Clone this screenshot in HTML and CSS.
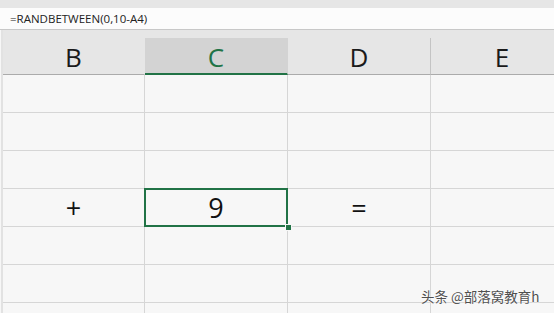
FILE: index.html
```html
<!DOCTYPE html>
<html lang="zh-CN">
  <head>
    <meta charset="UTF-8" />
    <title>RANDBETWEEN</title>
    <link rel="stylesheet" href="styles.css">
  </head>
  <body>
    <div class="topbar"></div>
    <div class="formula">=RANDBETWEEN(0,10-A4)</div>

    <div class="sheet">
      <div class="head">B</div>
      <div class="head active">C</div>
      <div class="head">D</div>
      <div class="head edge">E</div>

      <div class="cell"></div><div class="cell"></div><div class="cell"></div><div class="cell"></div>
      <div class="cell"></div><div class="cell"></div><div class="cell"></div><div class="cell"></div>
      <div class="cell"></div><div class="cell"></div><div class="cell"></div><div class="cell"></div>
      <div class="cell">+</div><div class="cell selected">9</div><div class="cell">=</div><div class="cell"></div>
      <div class="cell"></div><div class="cell"></div><div class="cell"></div><div class="cell"></div>
      <div class="cell"></div><div class="cell"></div><div class="cell"></div><div class="cell"></div>
      <div class="cell last"></div><div class="cell last"></div><div class="cell last"></div><div class="cell last"></div>
    </div>

    <div class="mark">头条 @部落窝教育h</div>
  </body>
</html>
```

FILE: styles.css
```css
body {
  margin: 0;
  width: 554px;
  height: 313px;
  overflow: hidden;
  position: relative;
  background: #f7f7f7;
  font-family: "Open Sans", "DejaVu Sans", sans-serif;
}
.topbar {
  height: 8px;
  background: #e6e6e6;
}
.formula {
  height: 21px;
  background: #fcfcfc;
  border-bottom: 1px solid #c8c8c8;
  padding-left: 10px;
  font-size: 11.5px;
  line-height: 21px;
  color: #222;
}
.sheet {
  display: grid;
  grid-template-columns: 142px 143px 143px 123px;
  grid-template-rows: 37px repeat(6, 38px) 10px;
  margin-left: 1px;
  border-left: 2px solid #e2e2e2;
  background: #e6e6e6;
  padding-top: 8px;
}
.head {
  border-bottom: 1px solid #ababab;
  border-right: 1px solid #c4c4c4;
  background: #e6e6e6;
  text-align: center;
  font-size: 26px;
  line-height: 38px;
  color: #1a1a1a;
}
.head:first-child {
  border-right-color: #e6e6e6;
}
.head.edge {
  border-right: none;
  padding-left: 19px;
}
.head.active {
  background: #d3d3d3;
  color: #217346;
  border-bottom: 2px solid #217346;
  border-right-color: #d3d3d3;
}
.cell {
  background: #f7f7f7;
  border-right: 1px solid #d6d6d6;
  border-bottom: 1px solid #d6d6d6;
  text-align: center;
  font-size: 27px;
  line-height: 38px;
  color: #111;
}
.cell:nth-child(4n) {
  border-right: none;
}
.cell.last {
  border-bottom: none;
}
.selected {
  position: relative;
}
.selected::after {
  content: "";
  position: absolute;
  inset: -1px;
  border: 2px solid #217346;
}
.selected::before {
  content: "";
  position: absolute;
  right: -4px;
  bottom: -4px;
  width: 5px;
  height: 5px;
  background: #217346;
  outline: 1px solid #f7f7f7;
  z-index: 1;
}
.mark {
  position: absolute;
  left: 421px;
  top: 286px;
  font-family: "Noto Sans CJK SC", sans-serif;
  font-size: 13.5px;
  white-space: nowrap;
  color: #505050;
  text-shadow: 0 0 2px #fff, 0 0 1px #fff;
}
```
